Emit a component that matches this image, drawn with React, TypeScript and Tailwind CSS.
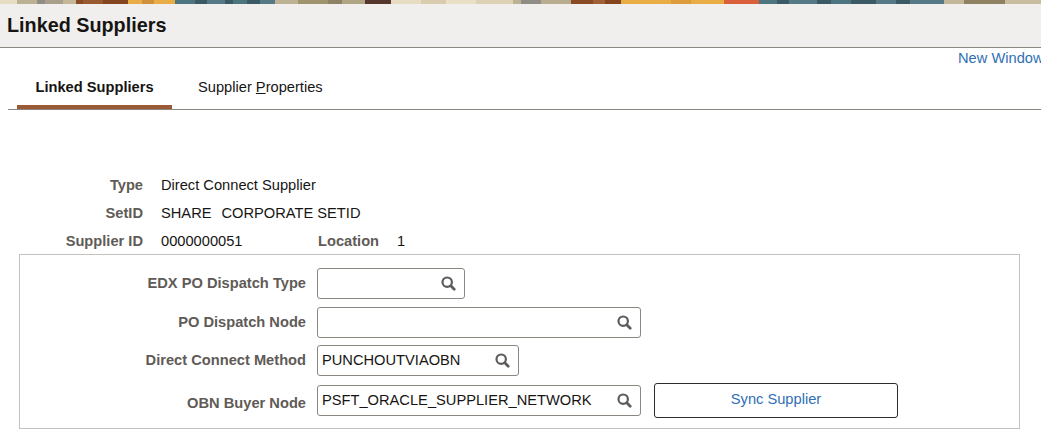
const F = "font-['Liberation_Sans',Arial,sans-serif]";

const bands: [number, string][] = [
  [17, '#e6dcc2'], [20, '#bcb193'], [8, '#8f8d85'], [18, '#a8a08c'], [13, '#c4b898'],
  [7, '#8a4a25'], [20, '#9a5a30'], [25, '#84441f'],
  [14, '#e8ad45'], [12, '#d0913a'], [21, '#e8ad45'],
  [20, '#4e7480'], [12, '#3c5a64'], [18, '#557a86'], [8, '#3c5a64'], [14, '#4e7480'], [13, '#3c5a64'], [15, '#557a86'],
  [23, '#bdb294'], [30, '#a0946f'], [14, '#8d8266'], [23, '#b0a582'],
  [26, '#54362c'],
  [30, '#e6dcc2'], [25, '#d8ccac'], [30, '#e8dfc6'], [37, '#ddd2b6'],
  [8, '#bcb193'], [20, '#8f8d85'], [30, '#b8ad90'],
  [22, '#8a4a25'], [12, '#a05f34'], [16, '#84441f'],
  [50, '#e8ad45'], [20, '#dc9c3c'], [33, '#e8ad45'],
  [35, '#d9603a'],
  [18, '#4e7480'], [12, '#3c5a64'], [28, '#557a86'], [14, '#3c5a64'], [20, '#4e7480'], [25, '#3c5a64'], [20, '#557a86'], [14, '#3c5a64'], [34, '#557a86'],
  [20, '#c2b798'], [41, '#8f8263'],
];

function Banner() {
  return (
    <div className="flex h-1 w-full overflow-hidden bg-[#c9bda0]">
      {bands.map(([w, c], i) => (
        <div key={i} className="h-full shrink-0" style={{ width: w, background: c }} />
      ))}
    </div>
  );
}

function Lens() {
  return (
    <svg width="15" height="15" viewBox="0 0 15 15" fill="none" className="shrink-0">
      <circle cx="6.2" cy="6.2" r="4.7" stroke="#5c5c5c" strokeWidth="2.2" />
      <path d="M9.8 9.8 L13.2 13.2" stroke="#5c5c5c" strokeWidth="2.8" strokeLinecap="round" />
    </svg>
  );
}

function Prompt({ value, w }: { value?: string; w: string }) {
  return (
    <div className={`flex h-[31px] items-center justify-between rounded-[3px] border border-[#8d8781] bg-white pl-1 pr-[8px] ${w}`}>
      <span className="pb-[2px] text-[14.67px] text-[#161513]">{value}</span>
      <Lens />
    </div>
  );
}

function Label({ children, low }: { children: string; low?: boolean }) {
  return (
    <div className={`w-[287px] shrink-0 pr-px text-right text-[14.67px] font-bold text-[#5f5b57] ${low ? 'pt-[4px]' : 'pb-[2px]'}`}>
      {children}
    </div>
  );
}

function Info({ label, children }: { label: string; children: React.ReactNode }) {
  return (
    <div className="flex h-[28px] items-center text-[14.67px]">
      <div className="w-[143px] text-right font-bold text-[#5f5b57]">{label}</div>
      <div className="ml-[18px] flex items-center text-[#161513]">{children}</div>
    </div>
  );
}

export default function App() {
  return (
    <div className={`${F} h-[441px] w-[1041px] overflow-hidden bg-white`}>
      <Banner />
      <div className="flex h-[43px] items-center bg-[#f0efed] pl-[7px]">
        <h1 className="text-[19.8px] font-bold text-[#161513]">Linked Suppliers</h1>
      </div>
      <div className="h-px bg-[#8d8781]" />
      <div className="h-[15px] overflow-visible whitespace-nowrap pl-[958px]">
        <span className="mt-[1px] block text-[14.67px] leading-[18px] text-[#2f6fb5]">New Window</span>
      </div>
      <div className="ml-[8px] flex h-[46px] items-stretch border-b border-[#8d8781] text-[14.67px]">
        <div className="ml-[9px] flex w-[155px] items-center justify-center border-b-[4px] border-[#9a5a36] pt-[4px] font-bold text-[#161513]">
          Linked Suppliers
        </div>
        <div className="ml-[26px] flex items-center pt-[1px] text-[#161513]">
          <span>
            Supplier <span className="underline">P</span>roperties
          </span>
        </div>
      </div>
      <div className="pt-[61px]">
        <Info label="Type">Direct Connect Supplier</Info>
        <Info label="SetID">
          <span>SHARE</span>
          <span className="ml-[10px]">CORPORATE SETID</span>
        </Info>
        <Info label="Supplier ID">
          <span className="w-[157px]">0000000051</span>
          <span className="font-bold text-[#5f5b57]">Location</span>
          <span className="ml-[18px]">1</span>
        </Info>
      </div>
      <div className="-mt-px ml-[19px] h-[175px] w-[1001px] border border-[#c4c2bf] pt-[13px]">
        <div className="flex flex-col gap-[8px]">
          <div className="flex items-center">
            <Label>EDX PO Dispatch Type</Label>
            <div className="ml-[10px]"><Prompt w="w-[148px]" /></div>
          </div>
          <div className="flex items-center">
            <Label>PO Dispatch Node</Label>
            <div className="ml-[10px]"><Prompt w="w-[324px]" /></div>
          </div>
          <div className="-mt-px flex items-center">
            <Label>Direct Connect Method</Label>
            <div className="ml-[10px]"><Prompt value="PUNCHOUTVIAOBN" w="w-[202px]" /></div>
          </div>
          <div className="-mt-px flex items-center">
            <Label low>OBN Buyer Node</Label>
            <div className="ml-[10px]"><Prompt value="PSFT_ORACLE_SUPPLIER_NETWORK" w="w-[324px]" /></div>
            <button className="ml-[13px] h-[35px] w-[244px] rounded-[3px] border border-[#2f2d2b] bg-white pb-[4px] text-[14.67px] text-[#2f6fb5]">
              Sync Supplier
            </button>
          </div>
        </div>
      </div>
    </div>
  );
}
